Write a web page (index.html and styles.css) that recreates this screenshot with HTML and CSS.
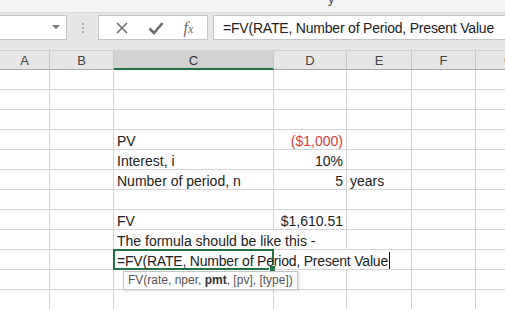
FILE: index.html
```html
<!DOCTYPE html>
<html lang="en">

<head>
    <meta charset="UTF-8">
    <title>Future Value - Excel</title>
    <link rel="stylesheet" href="styles.css">
</head>

<body>
    <div class="ribbon-edge"><span class="ribbon-hint">y</span></div>

    <div class="formula-bar">
        <div class="name-box">
            <span class="name-arrow"></span>
        </div>
        <div class="grip">
            <i></i><i></i><i></i>
        </div>
        <div class="bar-buttons">
            <svg class="bar-icon" width="14" height="14" viewBox="0 0 14 14">
                <path d="M2 2 L12 12 M12 2 L2 12" stroke="#6d6d6d" stroke-width="1.6" fill="none"/>
            </svg>
            <svg class="bar-icon" width="16" height="14" viewBox="0 0 16 14">
                <path d="M1.5 7.5 L6 12 L14.5 2" stroke="#6d6d6d" stroke-width="2.6" fill="none"/>
            </svg>
            <span class="fx">f<sub>x</sub></span>
        </div>
        <div class="formula-input">=FV(RATE, Number of Period, Present Value</div>
    </div>

    <div class="sheet">
        <div class="col-head">A</div>
        <div class="col-head">B</div>
        <div class="col-head active">C</div>
        <div class="col-head">D</div>
        <div class="col-head">E</div>
        <div class="col-head">F</div>
        <div class="col-head last">G</div>

        <!-- rows 1-3 -->
        <div class="cell"></div><div class="cell"></div><div class="cell"></div><div class="cell"></div><div class="cell"></div><div class="cell"></div><div class="cell"></div>
        <div class="cell"></div><div class="cell"></div><div class="cell"></div><div class="cell"></div><div class="cell"></div><div class="cell"></div><div class="cell"></div>
        <div class="cell"></div><div class="cell"></div><div class="cell"></div><div class="cell"></div><div class="cell"></div><div class="cell"></div><div class="cell"></div>

        <!-- PV -->
        <div class="cell"></div><div class="cell"></div>
        <div class="cell">PV</div>
        <div class="cell num negative">($1,000)</div>
        <div class="cell"></div><div class="cell"></div><div class="cell"></div>

        <!-- Interest -->
        <div class="cell"></div><div class="cell"></div>
        <div class="cell">Interest, i</div>
        <div class="cell num">10%</div>
        <div class="cell"></div><div class="cell"></div><div class="cell"></div>

        <!-- Number of period -->
        <div class="cell"></div><div class="cell"></div>
        <div class="cell">Number of period, n</div>
        <div class="cell num">5</div>
        <div class="cell">years</div>
        <div class="cell"></div><div class="cell"></div>

        <!-- blank -->
        <div class="cell"></div><div class="cell"></div><div class="cell"></div><div class="cell"></div><div class="cell"></div><div class="cell"></div><div class="cell"></div>

        <!-- FV -->
        <div class="cell"></div><div class="cell"></div>
        <div class="cell">FV</div>
        <div class="cell num">$1,610.51</div>
        <div class="cell"></div><div class="cell"></div><div class="cell"></div>

        <!-- note -->
        <div class="cell"></div><div class="cell"></div>
        <div class="cell span-cd">The formula should be like this -</div>
        <div class="cell"></div><div class="cell"></div><div class="cell"></div>

        <!-- editing cell -->
        <div class="cell"></div><div class="cell"></div>
        <div class="cell span-ce editing">
            <span class="selection"><span class="fill-handle"></span></span>
            <span class="edit-text">=FV(RATE, Number of Period, Present Value</span><span class="caret"></span>
            <div class="func-tip">FV(rate, nper, <b>pmt</b>, [pv], [type])</div>
        </div>
        <div class="cell"></div><div class="cell"></div>

        <div class="cell"></div><div class="cell"></div><div class="cell"></div><div class="cell"></div><div class="cell"></div><div class="cell"></div><div class="cell"></div>
        <div class="cell"></div><div class="cell"></div><div class="cell"></div><div class="cell"></div><div class="cell"></div><div class="cell"></div><div class="cell"></div>
    </div>
</body>

</html>
```

FILE: styles.css
```css
body {
    margin: 0;
    width: 505px;
    height: 309px;
    overflow: hidden;
    background-color: white;
    font-family: "Liberation Sans", Arial, sans-serif;
    color: #222;
}

.ribbon-edge {
    height: 12px;
    background-color: #f3f3f3;
    border-bottom: 1px solid #dadada;
    overflow: hidden;
    position: relative;
}

.ribbon-hint {
    position: absolute;
    left: 328px;
    top: -9px;
    font-size: 13px;
    color: #555;
}

.formula-bar {
    height: 37px;
    background-color: #e6e6e6;
    display: flex;
    align-items: flex-start;
    padding-top: 2px;
    box-sizing: border-box;
}

.name-box,
.bar-buttons,
.formula-input {
    height: 25px;
    box-sizing: border-box;
    background-color: white;
    border: 1px solid #c6c6c6;
}

.name-box {
    width: 68px;
    margin-left: -1px;
    position: relative;
}

.name-arrow {
    position: absolute;
    right: 6px;
    top: 9px;
    border-left: 4px solid transparent;
    border-right: 4px solid transparent;
    border-top: 4px solid #777;
}

.grip {
    width: 31px;
    height: 25px;
    display: flex;
    flex-direction: column;
    align-items: center;
    justify-content: center;
    gap: 2px;
}

.grip i {
    width: 2px;
    height: 2px;
    background-color: #b0b0b0;
}

.bar-buttons {
    width: 110px;
    display: flex;
    align-items: center;
    justify-content: space-around;
    padding: 0 4px 0 6px;
}

.fx {
    font-family: "Liberation Serif", serif;
    font-style: italic;
    font-size: 16px;
    color: #6d6d6d;
    line-height: 1;
}

.fx sub {
    font-size: 12px;
    vertical-align: 0;
}

.formula-input {
    flex: 1;
    margin-left: 5px;
    margin-right: -1px;
    padding-left: 9px;
    font-size: 14px;
    letter-spacing: -0.2px;
    line-height: 24px;
    white-space: nowrap;
    overflow: hidden;
    color: #222;
}

.sheet {
    display: grid;
    grid-template-columns: 50px 64px 160px 73px 65px 64px 1fr;
    grid-template-rows: 20px;
    grid-auto-rows: 20px;
    font-size: 14px;
}

.col-head {
    background-color: #e6e6e6;
    border-top: 1px solid #d0d0d0;
    border-right: 1px solid #c8c8c8;
    border-bottom: 1px solid #ababab;
    box-sizing: border-box;
    text-align: center;
    font-size: 13px;
    line-height: 19px;
    color: #444;
}

.col-head.active {
    background-color: #d2d2d2;
    border-bottom: 2px solid #217346;
    color: #333;
}

.col-head.last {
    text-align: left;
    padding-left: 28px;
    color: #c0504d;
    border-right: none;
}

.cell {
    border-right: 1px solid #d4d4d4;
    border-bottom: 1px solid #d4d4d4;
    box-sizing: border-box;
    padding: 2px 3px 0 3px;
    line-height: 19px;
    white-space: nowrap;
    min-width: 0;
}

.num {
    text-align: right;
}

.negative {
    color: #e0393e;
}

.span-cd {
    grid-column: span 2;
}

.span-ce {
    grid-column: span 3;
}

.editing {
    position: relative;
    display: flex;
    align-items: flex-start;
    overflow: visible;
}

.selection {
    position: absolute;
    left: -1px;
    top: -1px;
    width: 161px;
    height: 21px;
    border: 2px solid #217346;
    box-sizing: border-box;
}

.fill-handle {
    position: absolute;
    right: -4px;
    bottom: -4px;
    width: 5px;
    height: 5px;
    background-color: #217346;
    border: 1px solid white;
}

.edit-text {
    position: relative;
    letter-spacing: -0.2px;
}

.caret {
    width: 1px;
    height: 17px;
    margin-left: 1px;
    background-color: #111;
}

.func-tip {
    position: absolute;
    left: 9px;
    top: 21px;
    z-index: 2;
    background-color: white;
    border: 1px solid #c6c6c6;
    box-shadow: 1px 1px 2px rgba(0, 0, 0, 0.15);
    padding: 0 4px;
    font-size: 12px;
    line-height: 17px;
    color: #555;
}

.func-tip b {
    color: #333;
}
```
